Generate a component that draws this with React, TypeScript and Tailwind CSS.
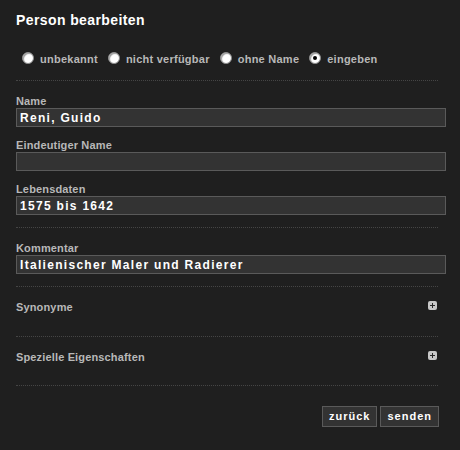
const font = { fontFamily: '"Liberation Sans", Arial, sans-serif' };

const RADIOS = [
  { label: "unbekannt", checked: false },
  { label: "nicht verfügbar", checked: false },
  { label: "ohne Name", checked: false },
  { label: "eingeben", checked: true },
];

const FIELDS_TOP = [
  { label: "Name", value: "Reni, Guido" },
  { label: "Eindeutiger Name", value: "" },
  { label: "Lebensdaten", value: "1575 bis 1642" },
];

const Dots = ({ className = "" }: { className?: string }) => (
  <div className={`w-[422px] border-t border-dotted border-[#454545] ${className}`} />
);

const Radio = ({ checked }: { checked: boolean }) => (
  <span className="relative flex h-[12px] w-[12px] items-center justify-center rounded-full border border-[#8a8a8a] bg-white shadow-[inset_1px_1px_1px_#9a9a9a]">
    {checked && <span className="h-[4px] w-[4px] rounded-full bg-black" />}
  </span>
);

const Field = ({ label, value, className = "" }: { label: string; value: string; className?: string }) => (
  <div className={className}>
    <div className="h-[13px] text-[11px] font-bold leading-[13px] tracking-[0.15px] text-[#b8b8b8]">{label}</div>
    <div className="flex h-[19px] w-[430px] items-center border border-[#5a5a5a] bg-[#333333] px-[3px] text-[12px] font-bold tracking-[1.3px] text-white">
      {value}
    </div>
  </div>
);

const PlusBox = () => (
  <span className="relative mt-[-4px] flex h-[9px] w-[9px] items-center justify-center rounded-[2px] bg-[#c8c8c8]">
    <span className="absolute h-[5px] w-[1px] bg-[#2a2a2a]" />
    <span className="absolute h-[1px] w-[5px] bg-[#2a2a2a]" />
  </span>
);

const Section = ({ title }: { title: string }) => (
  <div className="mt-[13px] flex h-[14px] w-[422px] items-center justify-between pr-[1px]">
    <span className="text-[11px] font-bold tracking-[0.15px] text-[#b8b8b8]">{title}</span>
    <PlusBox />
  </div>
);

const Button = ({ children }: { children: string }) => (
  <button className="h-[21px] border border-[#5a5a5a] bg-[#333333] px-[6px] text-[11px] font-bold tracking-[1px] text-white">
    {children}
  </button>
);

const App = () => {
  return (
    <div className="h-[450px] w-[460px] overflow-hidden bg-[#1f1f1f] pl-4" style={font}>
      <h1 className="pt-[11px] text-[14px] font-bold leading-[18px] tracking-[0.4px] text-white">Person bearbeiten</h1>

      <div className="mt-[23px] flex h-[14px] items-center pl-[6px]">
        {RADIOS.map((r) => (
          <label key={r.label} className="mr-[10px] flex items-center">
            <span className="-mt-[3px]">
              <Radio checked={r.checked} />
            </span>
            <span className="ml-[6px] text-[11px] font-bold tracking-[0.25px] text-[#b8b8b8]">{r.label}</span>
          </label>
        ))}
      </div>

      <Dots className="mt-[14px]" />

      {FIELDS_TOP.map((f, i) => (
        <Field key={f.label} label={f.label} value={f.value} className={i === 0 ? "mt-[14px]" : "mt-[12px]"} />
      ))}

      <Dots className="mt-[12px]" />

      <Field label="Kommentar" value="Italienischer Maler und Radierer" className="mt-[14px]" />

      <Dots className="mt-[12px]" />
      <Section title="Synonyme" />
      <Dots className="mt-[22px]" />
      <Section title="Spezielle Eigenschaften" />
      <Dots className="mt-[21px]" />

      <div className="mt-[20px] flex w-[423px] justify-end gap-[3px]">
        <Button>zurück</Button>
        <Button>senden</Button>
      </div>
    </div>
  );
};

export default App;
